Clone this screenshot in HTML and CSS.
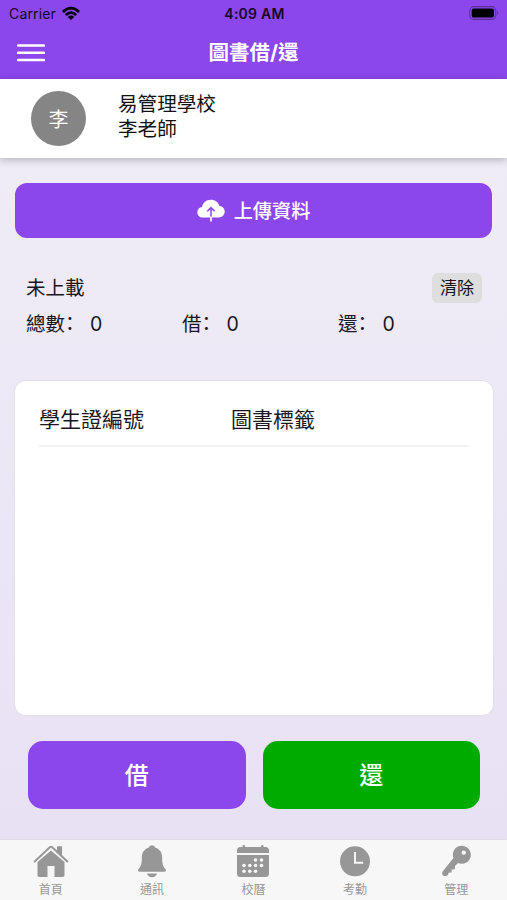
FILE: index.html
```html
<!DOCTYPE html>
<html lang="zh-Hant">
<head>
<meta charset="utf-8">
<meta name="viewport" content="width=device-width, initial-scale=1">
<title>圖書借/還</title>
<link rel="stylesheet" href="styles.css">
</head>
<body>
<div class="app">
  <header class="header">
    <div class="status">
      <div class="carrier"><span>Carrier</span>
        <svg width="20" height="14" viewBox="0 0 20 14"><path d="M1 4.900Q10-3.200 19 4.900L17.200 6.900Q10 .3 2.800 6.900ZM3.900 8Q10 2.400 16.100 8L14.300 9.900Q10 6.200 5.700 9.900ZM6.800 10.900Q10 8 13.200 10.900L10 14Z"/></svg>
      </div>
      <div class="time">4:09 AM</div>
      <div class="power"><svg width="31" height="14" viewBox="0 0 31 14"><rect x=".8" y=".6" width="26" height="12.800" rx="4" fill="none" stroke="#5b2e9b" stroke-width="1.100"/><rect x="2.700" y="2.400" width="22.300" height="9.200" rx="2.200"/><path d="M28.200 5q2 2 0 4z" fill="#5b2e9b"/></svg></div>
    </div>
    <div class="navbar">
      <svg width="28" height="20" viewBox="0 0 28 20"><path d="M1 2.500h26M1 9.800h26M1 17.100h26" fill="none" stroke="#fff" stroke-width="2.500" stroke-linecap="round"/></svg>
      <h1 class="title">圖書借/還</h1>
    </div>
  </header>
  <section class="profile">
    <div class="avatar">李</div>
    <div class="who"><div>易管理學校</div><div>李老師</div></div>
  </section>
  <main class="content">
    <button class="upload">
      <svg width="28" height="24" viewBox="0 0 28 24"><path d="M6 18.500C2.500 18.500.3 16.200.3 13.200c0-2.800 2-4.800 4.700-5.200C5.800 3.600 9.400.8 14 .8c4.100 0 7.300 2.500 8.400 6.200 3.100.3 5.300 2.600 5.300 5.600 0 3.400-2.500 5.900-6 5.900z" fill="#fff"/><path d="M14 18.500V8.800M10.300 12.300L14 8.600l3.700 3.700" fill="none" stroke="#8b47ec" stroke-width="1.500"/><path d="M14 17.500v5" stroke="#fff" stroke-width="1.700"/></svg>
      <span>上傳資料</span>
    </button>
    <div class="state"><span>未上載</span><button class="clear">清除</button></div>
    <div class="counts">
      <div><span>總數</span><span class="colon">：</span><span class="num">0</span></div>
      <div><span>借</span><span class="colon">：</span><span class="num">0</span></div>
      <div><span>還</span><span class="colon">：</span><span class="num">0</span></div>
    </div>
    <section class="records">
      <div class="columns"><span>學生證編號</span><span>圖書標籤</span></div>
    </section>
    <div class="actions"><button class="borrow">借</button><button class="return">還</button></div>
  </main>
  <nav class="tabs">
    <div class="tab"><svg viewBox="0 0 36 36"><path d="M4.500 18L18 6.500 31.500 18v13.200q0 1.800-1.800 1.800H21.500V22h-7v11H6.300q-1.800 0-1.800-1.800z"/><path d="M1.700 17.500L16.800 3.300q1.200-1 2.400 0L34.300 17.500" fill="none" stroke="#f7f7f7" stroke-width="4"/><path d="M24 2.200h5v9.300l-5-4.600z"/><path d="M1.700 17.500L16.800 3.300q1.200-1 2.400 0L34.300 17.500" fill="none" stroke="#979797" stroke-width="2" stroke-linecap="round"/></svg><span>首頁</span></div>
    <div class="tab"><svg viewBox="0 0 36 36"><path d="M18 1.200q2.600 0 3.400 2.500c4.500 1.300 6.700 5 6.700 9.300 0 6.500 1 9.700 3.200 11.700 1.300 1.300.7 3-1 3H5.700c-1.700 0-2.300-1.700-1-3C6.900 22.700 7.900 19.500 7.900 13c0-4.300 2.200-8 6.700-9.300q.8-2.500 3.400-2.500zM13 29.500h10q-1.300 3.800-5 3.800t-5-3.800z"/></svg><span>通訊</span></div>
    <div class="tab"><svg viewBox="0 0 36 36"><path d="M2 9V6.500Q2 3 5.500 3H7.500V2.200q0-1.200 1.300-1.200t1.300 1.200V3h15.800v-.8q0-1.200 1.300-1.200t1.300 1.200V3h2Q34 3 34 6.500V9zM2 11h32v18.500q0 3.500-3.500 3.500h-25Q2 33 2 29.500z"/><g fill="#f7f7f7"><circle cx="20.500" cy="16" r="1.800"/><circle cx="26.500" cy="16" r="1.800"/><circle cx="9" cy="21.500" r="1.800"/><circle cx="14.800" cy="21.500" r="1.800"/><circle cx="20.500" cy="21.500" r="1.800"/><circle cx="26.500" cy="21.500" r="1.800"/><circle cx="9" cy="27.300" r="1.800"/><circle cx="14.800" cy="27.300" r="1.800"/><circle cx="20.500" cy="27.300" r="1.800"/></g></svg><span>校曆</span></div>
    <div class="tab"><svg viewBox="0 0 36 36"><circle cx="18" cy="17.300" r="15"/><path d="M18 8v10.800h8.200" fill="none" stroke="#f7f7f7" stroke-width="1.900"/></svg><span>考勤</span></div>
    <div class="tab"><svg viewBox="1.500 0.500 36 36"><path fill-rule="evenodd" d="M25.200 2.300a9 9 0 1 1-3.600 17.200L18.500 22.600l-.2 3.200-3 .3-.3 3-3 .2-.5 2.300q-2.300 2.100-5 .3-1.800-1.900-.3-3.800L16.900 14.500A9 9 0 0 1 25.200 2.300zm2 4.600a2.200 2.200 0 1 0 .1 4.400 2.200 2.200 0 0 0-.1-4.400z"/></svg><span>管理</span></div>
  </nav>
</div>
</body>
</html>
```
FILE: styles.css
```css
* { box-sizing: border-box; }
body { margin: 0; color: #19171c; font-family: Inter, "Noto Sans CJK TC", sans-serif; }
button { border: 0; padding: 0; color: #fff; font: inherit; }
svg { display: block; }
.app { display: flex; flex-direction: column; height: 900px; overflow: hidden; background: linear-gradient(#efecf6 170px, #e8e1f4 840px); }
.header { height: 79px; flex: none; background: #8b47ec; }
.status { display: grid; grid-template-columns: 1fr auto 1fr; align-items: center; height: 27px; padding: 0 7px 0 9px; color: #160829; font-size: 14px; }
.carrier { display: flex; align-items: center; gap: 5px; letter-spacing: .15px; }
.carrier svg { margin-bottom: 2px; }
.time { font-size: 14px; font-weight: 600; letter-spacing: .25px; }
.power { display: flex; justify-content: flex-end; padding-bottom: 1px; }
.navbar { display: grid; grid-template-columns: 1fr auto 1fr; align-items: center; height: 52px; padding: 0 17px; }
.title { margin: 0; color: #fff; font-size: 20.500px; font-weight: 700; line-height: 30px; }
.profile { position: relative; display: flex; flex: none; height: 79px; padding: 12px 31px; gap: 32px; background: #fff; box-shadow: 0 2px 8px rgb(0 0 0 / 25%); }
.avatar { display: grid; place-items: center; width: 55px; height: 55px; padding-bottom: 1px; border-radius: 50%; background: #858585; color: #fff; font-size: 20px; }
.who { padding-top: 1px; font-size: 19.600px; line-height: 24.500px; color: #111; }
.content { display: flex; flex: 1; flex-direction: column; padding: 25px 13px 0 14px; }
.upload { display: flex; align-items: center; justify-content: center; gap: 9px; height: 55px; margin: 0 2px 0 1px; border-radius: 12px; background: #8b47ec; font-size: 19.200px; font-weight: 500; }
.upload span { padding-bottom: 2px; }
.state { display: flex; align-items: center; justify-content: space-between; height: 30px; margin: 35px 12px 0; font-size: 19.500px; }
.state > span { padding-bottom: 4px; }
.clear { width: 50px; height: 30px; padding-bottom: 3px; border-radius: 6px; background: #dededf; color: #19171c; font-size: 17px; }
.counts { display: grid; grid-template-columns: repeat(3, 156px); height: 30px; margin: 6px 12px 0; font-size: 19.500px; line-height: 30px; }
.counts div { display: flex; }
.colon { width: 20px; font-family: "Noto Sans CJK SC", sans-serif; line-height: 26px; }
.num { margin-left: 5px; }
.records { height: 336px; margin-top: 41px; padding: 18px 24px; border: 1px solid #e3dfe8; border-radius: 12px; background: #fff; }
.columns { display: grid; grid-template-columns: 192px 1fr; height: 48px; border-bottom: 2px solid #f2f2f2; font-size: 21px; line-height: 42px; }
.actions { display: grid; grid-template-columns: 1fr 1fr; gap: 17px; margin: 25px 14px 0; }
.actions button { height: 68px; padding-bottom: 3px; border-radius: 15px; font-size: 24px; font-weight: 500; }
.actions .borrow { background: #8b47ec; }
.actions .return { background: #00ab00; }
.tabs { display: grid; grid-template-columns: repeat(5, 1fr); flex: none; height: 61px; border-top: 1px solid #e0dce3; background: #f7f7f7; color: #979797; font-size: 12px; }
.tab { display: flex; flex-direction: column; align-items: center; padding-top: 4px; }
.tab svg { width: 36px; height: 36px; fill: currentColor; }
.tab span { line-height: 18px; margin-top: 1px; }
```
